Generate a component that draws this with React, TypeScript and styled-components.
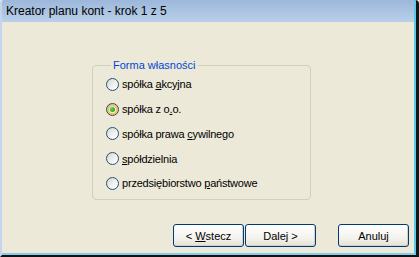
import styled, { createGlobalStyle } from 'styled-components';

const GlobalStyle = createGlobalStyle`
	html, body {
		margin: 0;
		padding: 0;
		background: #ece9d8;
	}
	body {
		font-family: 'Liberation Sans', Arial, sans-serif;
	}
`;

type Option = { label: string; key: number; checked?: boolean };

const options: Option[] = [
	{ label: 'spółka akcyjna', key: 7 },
	{ label: 'spółka z o.o.', key: 10, checked: true },
	{ label: 'spółka prawa cywilnego', key: 13 },
	{ label: 'spółdzielnia', key: 0 },
	{ label: 'przedsiębiorstwo państwowe', key: 17 },
];

function withAccessKey(label: string, idx: number) {
	return (
		<>
			{label.slice(0, idx)}
			<AccessKey>{label[idx]}</AccessKey>
			{label.slice(idx + 1)}
		</>
	);
}

export default function App() {
	return (
		<>
			<GlobalStyle />
			<Window>
				<TitleBar>Kreator planu kont - krok 1 z 5</TitleBar>
				<Body>
					<GroupBox>
						<Legend>Forma własności</Legend>
						<RadioList>
							{options.map((opt) => (
								<RadioRow key={opt.label}>
									<Radio $checked={!!opt.checked} />
									<RadioLabel>{withAccessKey(opt.label, opt.key)}</RadioLabel>
								</RadioRow>
							))}
						</RadioList>
					</GroupBox>
					<ButtonBar>
						<NavButtons>
							<Button>
								&lt; <AccessKey>W</AccessKey>stecz
							</Button>
							<Button>Dalej &gt;</Button>
						</NavButtons>
						<Button>Anuluj</Button>
					</ButtonBar>
				</Body>
			</Window>
		</>
	);
}

const Window = styled.div`
	width: 419px;
	height: 257px;
	box-sizing: border-box;
	display: flex;
	flex-direction: column;
	background: #ece9d8;
	border-left: 2px solid #c3d4ef;
	border-right: 3px solid #151515;
	border-bottom: 2px solid #111;
	border-top-left-radius: 3px;
	border-top-right-radius: 4px;
	overflow: hidden;
`;

const TitleBar = styled.div`
	height: 22px;
	line-height: 23px;
	padding-left: 4px;
	font-size: 12px;
	color: #000;
	background: linear-gradient(#9cb7da, #b9d0e9);
	border-right: 2px solid #5cc9ea;
`;

const Body = styled.div`
	flex: 1;
	display: flex;
	flex-direction: column;
	border-right: 2px solid #5cc9ea;
	border-bottom: 2px solid #86cbea;
`;

const GroupBox = styled.fieldset`
	width: 219px;
	box-sizing: border-box;
	margin: 37px 0 0 90px;
	padding: 0 0 3px 13px;
	border: 1px solid #d0d0bf;
	border-radius: 4px;
`;

const Legend = styled.legend`
	margin-left: 5px;
	padding: 0 2px;
	font-size: 11px;
	line-height: 13px;
	color: #0046d5;
`;

const RadioList = styled.div`
	display: flex;
	flex-direction: column;
`;

const RadioRow = styled.div`
	height: 24.75px;
	display: flex;
	align-items: center;
	gap: 3px;
`;

const Radio = styled.span<{ $checked: boolean }>`
	position: relative;
	width: 13px;
	height: 13px;
	box-sizing: border-box;
	border-radius: 50%;
	border: 1px solid #1c5180;
	background: linear-gradient(135deg, #d6d4cc 0%, #f2f1ec 55%, #ffffff 100%);
	box-shadow: ${({ $checked }) => ($checked ? 'inset 0 0 0 2px #f7c04a' : 'none')};

	&::after {
		content: '';
		display: ${({ $checked }) => ($checked ? 'block' : 'none')};
		position: absolute;
		left: 3px;
		top: 3px;
		width: 5px;
		height: 5px;
		border-radius: 50%;
		background: radial-gradient(circle at 35% 35%, #5fd35f, #1a8f1a);
	}
`;

const RadioLabel = styled.span`
	font-size: 11px;
	letter-spacing: -0.2px;
	color: #000;
	white-space: nowrap;
`;

const AccessKey = styled.u`
	text-decoration: underline;
`;

const ButtonBar = styled.div`
	margin-top: auto;
	margin-bottom: 6px;
	margin-left: 171px;
	display: flex;
	align-items: center;
	gap: 22px;
`;

const NavButtons = styled.div`
	display: flex;
	gap: 1px;
`;

const Button = styled.button`
	width: 71px;
	height: 23px;
	padding: 0;
	box-sizing: border-box;
	border: 1px solid #003c74;
	border-radius: 3px;
	background: linear-gradient(#ffffff 0%, #f4f3ee 60%, #e3e1d6 100%);
	box-shadow: inset -1px -1px 0 #d6d0c5;
	font-family: 'Liberation Sans', Arial, sans-serif;
	font-size: 11px;
	color: #000;
`;
